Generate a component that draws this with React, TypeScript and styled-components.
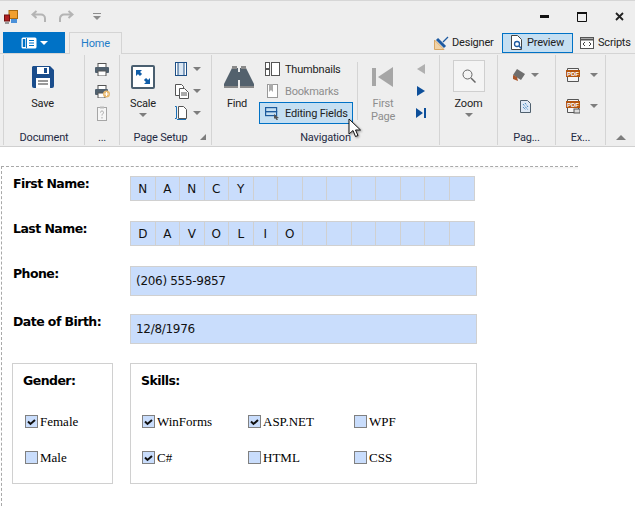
import React from 'react';
import styled, { createGlobalStyle } from 'styled-components';

const GlobalStyle = createGlobalStyle`
  html, body {
    margin: 0;
    padding: 0;
    background: #ffffff;
  }
  * {
    box-sizing: border-box;
  }
`;

const uiFont = `Roboto, 'Noto Sans', sans-serif`;

const Window = styled.div`
  width: 635px;
  height: 506px;
  overflow: hidden;
  position: relative;
  background: #fff;
`;

const TitleBar = styled.div`
  height: 32px;
  background: #eeeeee;
  border-top: 1px solid #d6d6d6;
  display: flex;
  align-items: center;
  padding-left: 4px;
`;

const QuickIcon = styled.span<{ $mr: number }>`
  display: flex;
  margin-right: ${p => p.$mr}px;
`;

const WindowButtons = styled.div`
  margin-left: auto;
  display: flex;
  align-items: center;
  gap: 28px;
  padding-right: 11px;
`;

const TabRow = styled.div`
  height: 21px;
  background: #eeeeee;
  display: flex;
  padding-left: 3px;
  align-items: stretch;
  font: 11px ${uiFont};
  letter-spacing: -0.2px;
  color: #222;
  position: relative;
`;

const FileButton = styled.div`
  width: 62px;
  background: #0072c6;
  display: flex;
  align-items: center;
  justify-content: center;
  gap: 3px;
`;

const WhiteArrow = styled.span`
  width: 0;
  height: 0;
  border-left: 4px solid transparent;
  border-right: 4px solid transparent;
  border-top: 4px solid #fff;
`;

const HomeTab = styled.div`
  width: 53px;
  margin-left: 4px;
  border: 1px solid #d4d4d4;
  border-bottom: none;
  background: #eeeeee;
  color: #1e7cc8;
  display: flex;
  align-items: center;
  justify-content: center;
  margin-bottom: -1px;
  position: relative;
  z-index: 1;
`;

const ModeSwitch = styled.div`
  margin-left: auto;
  display: flex;
  align-items: center;
  padding-right: 1px;
`;

const ModeButton = styled.div<{ $active?: boolean; $w: number; $pl: number }>`
  width: ${p => p.$w}px;
  height: 20px;
  display: flex;
  align-items: center;
  gap: 3px;
  padding-left: ${p => p.$pl}px;
  border: 1px solid ${p => (p.$active ? '#0072c6' : 'transparent')};
  background: ${p => (p.$active ? '#c5dff2' : 'transparent')};
  white-space: nowrap;
`;

const Ribbon = styled.div`
  height: 94px;
  background: #eeeeee;
  border-top: 1px solid #d4d4d4;
  border-bottom: 1px solid #d0d0d0;
  display: flex;
  padding-left: 3px;
  font: 11px ${uiFont};
  letter-spacing: -0.2px;
  color: #222;
`;

const Group = styled.div<{ $w: number }>`
  width: ${p => p.$w}px;
  flex: none;
  border-left: 1px solid #d4d4d4;
  margin-top: 1px;
  margin-bottom: 1px;
  display: flex;
  flex-direction: column;
  position: relative;
`;

const GroupBody = styled.div<{ $pl?: number; $gap?: number }>`
  height: 74px;
  padding-top: 6px;
  padding-left: ${p => p.$pl ?? 0}px;
  gap: ${p => p.$gap ?? 0}px;
  display: flex;
  justify-content: ${p => (p.$pl !== undefined ? 'flex-start' : 'center')};
`;

const GroupLabel = styled.div<{ $pr?: number }>`
  flex: 1;
  display: flex;
  align-items: center;
  justify-content: center;
  padding-right: ${p => p.$pr ?? 0}px;
  color: #1f2a44;
  position: relative;
`;

const Launcher = styled.span`
  position: absolute;
  right: 5px;
  bottom: 5px;
  width: 0;
  height: 0;
  border-left: 6px solid transparent;
  border-bottom: 6px solid #7d7d7d;
`;

const LargeButton = styled.div<{ $w?: number; $muted?: boolean; $ml?: number; $mr?: number }>`
  width: ${p => p.$w ?? 50}px;
  margin-left: ${p => p.$ml ?? 0}px;
  margin-right: ${p => p.$mr ?? 0}px;
  display: flex;
  flex-direction: column;
  align-items: center;
  text-align: center;
  line-height: 13px;
  color: ${p => (p.$muted ? '#8d8d8d' : '#222')};
`;

const LargeIcon = styled.div`
  height: 32px;
  display: flex;
  align-items: center;
  justify-content: center;
  margin-bottom: 4px;
`;

const Arrow = styled.span<{ $gap?: number }>`
  display: inline-block;
  width: 0;
  height: 0;
  border-left: 4px solid transparent;
  border-right: 4px solid transparent;
  border-top: 4px solid #7d7d7d;
  margin-left: ${p => p.$gap ?? 0}px;
`;

const DownArrow = styled(Arrow)`
  margin-top: 3px;
`;

const UpArrow = styled.span`
  width: 0;
  height: 0;
  border-left: 5px solid transparent;
  border-right: 5px solid transparent;
  border-bottom: 5px solid #7d7d7d;
`;

const SmallColumn = styled.div<{ $gap?: number; $top?: number; $ml?: number }>`
  display: flex;
  flex-direction: column;
  align-items: flex-start;
  gap: ${p => p.$gap ?? 0}px;
  margin-top: ${p => p.$top ?? -3}px;
  margin-left: ${p => p.$ml ?? 0}px;
`;

const SmallItem = styled.div<{ $pl?: number }>`
  height: 22px;
  display: flex;
  align-items: center;
  padding-left: ${p => p.$pl ?? 0}px;
`;

const NavItem = styled.div<{ $active?: boolean; $muted?: boolean }>`
  width: 94px;
  height: 22px;
  display: flex;
  align-items: center;
  gap: 5px;
  padding-left: 5px;
  border: 1px solid ${p => (p.$active ? '#0072c6' : 'transparent')};
  background: ${p => (p.$active ? '#c5dff2' : 'transparent')};
  color: ${p => (p.$muted ? '#8d8d8d' : '#222')};
  white-space: nowrap;
`;

const InnerDivider = styled.div`
  width: 1px;
  height: 58px;
  background: #d4d4d4;
  margin-top: 1px;
  margin-left: -2px;
`;

const ZoomBox = styled.div`
  width: 32px;
  height: 32px;
  margin-top: -1px;
  margin-bottom: 5px;
  border: 1px solid #cfcfcf;
  background: #f4f4f4;
  display: flex;
  align-items: center;
  justify-content: center;
`;

const Cursor = styled.svg`
  position: absolute;
  left: 348px;
  top: 118px;
  z-index: 5;
  filter: drop-shadow(1px 1px 1px rgba(0, 0, 0, 0.4));
`;

const Sheet = styled.div`
  width: 577px;
  margin-top: 19px;
  height: 340px;
  margin-left: 1px;
  border-top: 1px dashed #a8a8a8;
  border-left: 1px dashed #a8a8a8;
  padding: 9px 0 0 11px;
  position: relative;

  &::after {
    content: '';
    position: absolute;
    top: 0;
    right: 0;
    width: 178px;
    height: 3px;
    background: linear-gradient(#f3f3f3, rgba(255, 255, 255, 0));
  }
`;

const FormRow = styled.div<{ $mb: number }>`
  display: flex;
  margin-bottom: ${p => p.$mb}px;
`;

const FieldLabel = styled.div`
  width: 117px;
  flex: none;
  font: bold 12.5px 'DejaVu Sans', sans-serif;
  letter-spacing: -0.55px;
  color: #000;
  line-height: 16px;
`;

const CombField = styled.div`
  width: 345px;
  height: 25px;
  border: 1px solid #d0d0d0;
  background: #c9ddfc;
  display: grid;
  grid-template-columns: repeat(14, 1fr);
`;

const CombCell = styled.div`
  border-right: 1px solid #d0d0d0;
  display: flex;
  align-items: center;
  justify-content: center;
  font: 12px 'DejaVu Sans', sans-serif;
  color: #111;

  &:last-child {
    border-right: none;
  }
`;

const TextField = styled.div`
  width: 347px;
  height: 30px;
  border: 1px solid #d0d0d0;
  background: #c9ddfc;
  display: flex;
  align-items: center;
  padding-left: 5px;
  font: 12px 'DejaVu Sans', sans-serif;
  letter-spacing: -0.3px;
  color: #111;
`;

const GroupsRow = styled.div`
  display: flex;
  gap: 17px;
  margin-left: -1px;
`;

const BoxTitle = styled.div`
  font: bold 12.5px 'DejaVu Sans', sans-serif;
  letter-spacing: -0.55px;
  line-height: 16px;
  color: #000;
  margin-bottom: 26px;
`;

const OptionBox = styled.div<{ $w: number }>`
  width: ${p => p.$w}px;
  height: 121px;
  border: 1px solid #d0d0d0;
  padding: 9px 0 0 10px;
`;

const OptionGrid = styled.div<{ $cols: number; $indent: number }>`
  display: grid;
  grid-template-columns: repeat(${p => p.$cols}, 106px);
  row-gap: 23px;
  padding-left: ${p => p.$indent}px;
`;

const Option = styled.div`
  display: flex;
  align-items: center;
  gap: 2px;
  height: 13px;
  font: 13px 'Liberation Serif', serif;
  color: #000;
`;

const CheckBox = styled.span`
  width: 13px;
  height: 13px;
  flex: none;
  border: 1px solid #808080;
  background: #c9ddfc;
  display: flex;
  align-items: center;
  justify-content: center;
`;

const Sprite = ({ w, h, children }: { w: number; h: number; children: React.ReactNode }) => (
  <svg width={w} height={h} viewBox={`0 0 ${w} ${h}`} fill="none">
    {children}
  </svg>
);

const Check = () => (
  <Sprite w={9} h={8}>
    <path d="M1 3.5 L3.5 6 L8 2" stroke="#111" strokeWidth="2" />
  </Sprite>
);

const Field = ({ label, mb, children }: { label: string; mb: number; children: React.ReactNode }) => (
  <FormRow $mb={mb}>
    <FieldLabel>{label}</FieldLabel>
    {children}
  </FormRow>
);

const Comb = ({ text }: { text: string }) => (
  <CombField>
    {Array.from({ length: 14 }).map((_, i) => (
      <CombCell key={i}>{text[i] ?? ''}</CombCell>
    ))}
  </CombField>
);

const Opt = ({ label, checked }: { label: string; checked?: boolean }) => (
  <Option>
    <CheckBox>{checked && <Check />}</CheckBox>
    {label}
  </Option>
);

const PdfIcon = ({ mail }: { mail?: boolean }) => (
  <Sprite w={14} h={16}>
    <path d="M1.5 1.500h11v13h-11z" fill="#f4f4f4" stroke="#555" />
    <rect x="0" y="3" width="14" height="7" fill="#b5560f" />
    <text x="7" y="8.800" textAnchor="middle" fontSize="6" fontWeight="bold" fontFamily="'Liberation Sans', sans-serif" letterSpacing="0" fill="#fff">
      PDF
    </text>
    {mail && <rect x="8" y="11" width="6" height="4" fill="#dcdcdc" stroke="#555" />}
  </Sprite>
);

const App: React.FC = () => {
  return (
    <Window>
      <GlobalStyle />
      <TitleBar>
        <QuickIcon $mr={13}>
          <Sprite w={14} h={14}>
            <rect x="5" y="0.5" width="8.5" height="8" fill="#f0a030" stroke="#a86a10" />
            <rect x="0.5" y="5" width="5" height="6" fill="#b02020" stroke="#701010" />
            <rect x="7" y="9" width="6" height="4" fill="#4a90d9" />
            <rect x="1" y="12" width="4" height="2" fill="#999" />
          </Sprite>
        </QuickIcon>
        <QuickIcon $mr={11}>
          <Sprite w={16} h={13}>
            <path d="M5.5 1 L1.500 4.5 L5.5 8 M2 4.5 H10 a4 4 0 0 1 4 4 V12" stroke="#b4b4b4" strokeWidth="2" />
          </Sprite>
        </QuickIcon>
        <QuickIcon $mr={19}>
          <Sprite w={16} h={13}>
            <path d="M10.5 1 L14.5 4.5 L10.5 8 M14 4.5 H6 a4 4 0 0 0 -4 4 V12" stroke="#b4b4b4" strokeWidth="2" />
          </Sprite>
        </QuickIcon>
        <Sprite w={8} h={7}>
          <path d="M0 0h8v1H0zM0 3h8L4 7z" fill="#8c8c8c" />
        </Sprite>
        <WindowButtons>
          <Sprite w={9} h={3}>
            <rect width="9" height="3" fill="#111" />
          </Sprite>
          <Sprite w={10} h={10}>
            <path d="M0.5 1.5h9v8h-9z" stroke="#111" />
            <path d="M0 1h10" stroke="#111" strokeWidth="2" />
          </Sprite>
          <Sprite w={9} h={9}>
            <path d="M1 1l7 7M8 1L1 8" stroke="#222" strokeWidth="1.8" />
          </Sprite>
        </WindowButtons>
      </TitleBar>

      <TabRow>
        <FileButton>
          <Sprite w={16} h={12}>
            <rect x="0.5" y="0.5" width="15" height="11" rx="1.5" fill="#fff" />
            <path d="M5.5 1v10" stroke="#0072c6" />
            <path d="M8 3.5h5M8 6h5M8 8.5h5" stroke="#0072c6" />
            <rect x="1.8" y="2" width="2.5" height="8" fill="#0072c6" />
          </Sprite>
          <WhiteArrow />
        </FileButton>
        <HomeTab>Home</HomeTab>
        <ModeSwitch>
          <ModeButton $w={69} $pl={0}>
            <Sprite w={15} h={15}>
              <path d="M0.500 14.500V5l9.500 9.500z" fill="#f1d3a8" stroke="#d9a765" />
              <path d="M3 4l8 8" stroke="#1e5aa0" strokeWidth="3" />
              <path d="M9 7l5-5" stroke="#1e5aa0" strokeWidth="1.200" />
            </Sprite>
            Designer
          </ModeButton>
          <ModeButton $active $w={71} $pl={7}>
            <Sprite w={14} h={15}>
              <path d="M1.500 0.500h6l4 4v10h-10z" fill="#fff" stroke="#444" />
              <circle cx="7" cy="9" r="2.500" fill="#fff" stroke="#1e5aa0" strokeWidth="1.300" />
              <path d="M9 11l2.500 2.500" stroke="#1e5aa0" strokeWidth="1.500" />
            </Sprite>
            Preview
          </ModeButton>
          <ModeButton $w={61} $pl={6}>
            <Sprite w={15} h={12}>
              <rect x="0.500" y="0.500" width="13" height="11" fill="#fff" stroke="#555" />
              <path d="M0 2.500h14" stroke="#555" strokeWidth="2" />
              <path d="M5 5L3 7l2 2M9 5l2 2-2 2" stroke="#444" />
            </Sprite>
            Scripts
          </ModeButton>
        </ModeSwitch>
      </TabRow>

      <Ribbon>
        <Group $w={81}>
          <GroupBody>
            <LargeButton $mr={3}>
              <LargeIcon>
                <Sprite w={24} h={24}>
                  <path d="M2 1h17l4 4v16a2 2 0 0 1-2 2H3a2 2 0 0 1-2-2V2z" fill="#1a4d8c" />
                  <rect x="6" y="2" width="12" height="7" fill="#fff" />
                  <rect x="13" y="3" width="3" height="5" fill="#1a4d8c" />
                  <rect x="5" y="13" width="14" height="10" fill="#fff" />
                  <path d="M7 16h10M7 19h10" stroke="#999" strokeWidth="2" />
                </Sprite>
              </LargeIcon>
              Save
            </LargeButton>
          </GroupBody>
          <GroupLabel>Document</GroupLabel>
        </Group>

        <Group $w={35}>
          <GroupBody>
            <SmallColumn>
              <SmallItem>
                <Sprite w={14} h={13}>
                  <rect x="3" y="0.500" width="8" height="4" fill="#fff" stroke="#555" />
                  <rect x="0" y="4" width="14" height="6" rx="1" fill="#50606e" />
                  <rect x="3" y="8" width="8" height="5" fill="#fff" stroke="#555" />
                </Sprite>
              </SmallItem>
              <SmallItem>
                <Sprite w={15} h={13}>
                  <rect x="3" y="0.500" width="8" height="4" fill="#fff" stroke="#555" />
                  <rect x="0" y="4" width="13" height="6" rx="1" fill="#50606e" />
                  <rect x="3" y="8" width="7" height="5" fill="#fff" stroke="#555" />
                  <circle cx="11.500" cy="9" r="3.500" fill="#e8b970" />
                  <path d="M11.500 7v4M9.500 9h4" stroke="#fff" />
                </Sprite>
              </SmallItem>
              <SmallItem>
                <Sprite w={14} h={15}>
                  <rect x="2.500" y="1.500" width="9" height="13" fill="#f6f6f6" stroke="#a6a6a6" />
                  <rect x="5" y="0.500" width="4" height="2" fill="#bbb" />
                  <path d="M5.500 6.500c0-2 3-2 3 0 0 1.300-1.500 1.300-1.500 3M7 11v1.500" stroke="#a6a6a6" />
                </Sprite>
              </SmallItem>
            </SmallColumn>
          </GroupBody>
          <GroupLabel>...</GroupLabel>
        </Group>

        <Group $w={92}>
          <GroupBody $pl={10} $gap={19}>
            <LargeButton $w={26}>
              <LargeIcon>
                <Sprite w={24} h={24}>
                  <rect x="1" y="1" width="22" height="22" rx="1" fill="#fff" stroke="#4a5f70" strokeWidth="2" />
                  <path d="M6.500 6.500l3.500 3.500M14 14l3.500 3.500" stroke="#0f5da8" strokeWidth="3" />
                  <path d="M5 11V5h6zM19 13v6h-6z" fill="#0f5da8" />
                </Sprite>
              </LargeIcon>
              Scale
              <DownArrow />
            </LargeButton>
            <SmallColumn>
              <SmallItem>
                <Sprite w={12} h={14}>
                  <rect x="0.500" y="0.500" width="11" height="13" fill="#fff" stroke="#1d4f86" />
                  <rect x="3" y="0.500" width="6" height="13" fill="#dbe7f3" stroke="#1d4f86" />
                </Sprite>
                <Arrow $gap={6} />
              </SmallItem>
              <SmallItem>
                <Sprite w={14} h={15}>
                  <path d="M0.500 0.500h6l2 2v9h-8z" fill="#fff" stroke="#555" />
                  <path d="M4.500 4.500h5l4 4v6h-9z" fill="#fff" stroke="#555" />
                  <path d="M6 9h6M6 11h6" stroke="#555" />
                </Sprite>
                <Arrow $gap={4} />
              </SmallItem>
              <SmallItem>
                <Sprite w={12} h={14}>
                  <path d="M3.500 0.500h5l3 3v9h-8z" fill="#fff" stroke="#555" />
                  <path d="M0 0.500h1.500v12H0M2 13.500h9" stroke="#1a6fb5" />
                </Sprite>
                <Arrow $gap={6} />
              </SmallItem>
            </SmallColumn>
          </GroupBody>
          <GroupLabel $pr={10}>
            Page Setup
            <Launcher />
          </GroupLabel>
        </Group>

        <Group $w={228}>
          <GroupBody $pl={9} $gap={6}>
            <LargeButton $w={32}>
              <LargeIcon>
                <Sprite w={34} h={22}>
                  <path d="M12 2h6v20H4v-4z" fill="#53616d" />
                  <path d="M26 2h-6v20h14v-4z" fill="#53616d" />
                  <rect x="18" y="6" width="2" height="8" fill="#53616d" />
                  <path d="M12 0h5v3h-5zM21 0h5v3h-5zM4 20h14v2H4zM20 20h14v2H20z" fill="#8a8a8a" />
                </Sprite>
              </LargeIcon>
              Find
            </LargeButton>
            <SmallColumn>
              <NavItem>
                <Sprite w={15} h={14}>
                  <rect x="0.500" y="0.500" width="4" height="6" stroke="#555" fill="#fff" />
                  <rect x="0.500" y="7.500" width="4" height="6" stroke="#555" fill="#fff" />
                  <rect x="6.500" y="0.500" width="8" height="13" stroke="#555" fill="#fff" />
                </Sprite>
                Thumbnails
              </NavItem>
              <NavItem $muted>
                <Sprite w={15} h={14}>
                  <rect x="2.500" y="0.500" width="10" height="13" stroke="#999" fill="#fff" />
                  <path d="M4 0h4v8L6 6 4 8z" fill="#aaa" />
                </Sprite>
                Bookmarks
              </NavItem>
              <NavItem $active>
                <Sprite w={15} h={14}>
                  <rect x="0.600" y="1.600" width="11" height="4" stroke="#1d5a9c" strokeWidth="1.200" />
                  <rect x="0.600" y="5.600" width="11" height="4" stroke="#1d5a9c" strokeWidth="1.200" />
                  <path d="M9 8l5 4-2 .3 1 1.700-1.500 0-1.500-2-1 1z" fill="#555" />
                </Sprite>
                Editing Fields
              </NavItem>
            </SmallColumn>
            <InnerDivider />
            <LargeButton $w={48} $muted $ml={-5}>
              <LargeIcon>
                <Sprite w={22} h={20}>
                  <rect x="0" y="1" width="4" height="18" fill="#a6a6a6" />
                  <path d="M21 0v20L6 10z" fill="#a6a6a6" />
                </Sprite>
              </LargeIcon>
              First
              <br />
              Page
            </LargeButton>
            <SmallColumn $ml={3}>
              <SmallItem>
                <Sprite w={10} h={10}>
                  <path d="M9 0v10L1 5z" fill="#b0b0b0" />
                </Sprite>
              </SmallItem>
              <SmallItem>
                <Sprite w={10} h={10}>
                  <path d="M1 0v10l8-5z" fill="#0d4f9a" />
                </Sprite>
              </SmallItem>
              <SmallItem>
                <Sprite w={10} h={10}>
                  <path d="M0 0v10l7-5z" fill="#0d4f9a" />
                  <rect x="8" y="0" width="2" height="10" fill="#0d4f9a" />
                </Sprite>
              </SmallItem>
            </SmallColumn>
          </GroupBody>
          <GroupLabel>Navigation</GroupLabel>
        </Group>

        <Group $w={58}>
          <GroupBody>
            <LargeButton $w={32}>
              <ZoomBox>
                <Sprite w={14} h={14}>
                  <circle cx="5.500" cy="5.500" r="4.500" stroke="#666" />
                  <path d="M9 9l4.500 4.500" stroke="#666" strokeWidth="1.500" />
                </Sprite>
              </ZoomBox>
              Zoom
              <DownArrow />
            </LargeButton>
          </GroupBody>
          <GroupLabel />
        </Group>

        <Group $w={58}>
          <GroupBody $pl={14}>
            <SmallColumn $gap={9} $top={3}>
              <SmallItem>
                <Sprite w={14} h={14}>
                  <path d="M5 1l8 5-4 6-8-5z" fill="#6e6e6e" />
                  <path d="M1 7l4 2 1 4-5-2z" fill="#a8552a" />
                </Sprite>
                <Arrow $gap={5} />
              </SmallItem>
              <SmallItem $pl={8}>
                <Sprite w={11} h={13}>
                  <path d="M0.500 0.500h7l3 3v9h-10z" fill="#dfe9f5" stroke="#50606e" />
                  <path d="M3 4l5 6M3 7l3 3M5 3l3 4" stroke="#1a6fb5" strokeDasharray="1 1" />
                </Sprite>
              </SmallItem>
            </SmallColumn>
          </GroupBody>
          <GroupLabel>Pag...</GroupLabel>
        </Group>

        <Group $w={50}>
          <GroupBody $pl={10}>
            <SmallColumn $gap={9} $top={3}>
              <SmallItem>
                <PdfIcon />
                <Arrow $gap={10} />
              </SmallItem>
              <SmallItem>
                <PdfIcon mail />
                <Arrow $gap={10} />
              </SmallItem>
            </SmallColumn>
          </GroupBody>
          <GroupLabel>Ex...</GroupLabel>
        </Group>

        <Group $w={30}>
          <GroupBody />
          <GroupLabel>
            <UpArrow />
          </GroupLabel>
        </Group>
      </Ribbon>

      <Cursor width="14" height="20" viewBox="0 0 14 20">
        <path d="M1 1v15l4-3.500 2.500 6 2.500-1-2.500-5.500h5z" fill="#fff" stroke="#111" />
      </Cursor>

      <Sheet>
        <Field label="First Name:" mb={20}>
          <Comb text="NANCY" />
        </Field>
        <Field label="Last Name:" mb={20}>
          <Comb text="DAVOLIO" />
        </Field>
        <Field label="Phone:" mb={18}>
          <TextField>(206) 555-9857</TextField>
        </Field>
        <Field label="Date of Birth:" mb={19}>
          <TextField>12/8/1976</TextField>
        </Field>
        <GroupsRow>
          <OptionBox $w={101}>
            <BoxTitle>Gender:</BoxTitle>
            <OptionGrid $cols={1} $indent={2}>
              <Opt label="Female" checked />
              <Opt label="Male" />
            </OptionGrid>
          </OptionBox>
          <OptionBox $w={347}>
            <BoxTitle>Skills:</BoxTitle>
            <OptionGrid $cols={3} $indent={1}>
              <Opt label="WinForms" checked />
              <Opt label="ASP.NET" checked />
              <Opt label="WPF" />
              <Opt label="C#" checked />
              <Opt label="HTML" />
              <Opt label="CSS" />
            </OptionGrid>
          </OptionBox>
        </GroupsRow>
      </Sheet>
    </Window>
  );
};

export default App;
